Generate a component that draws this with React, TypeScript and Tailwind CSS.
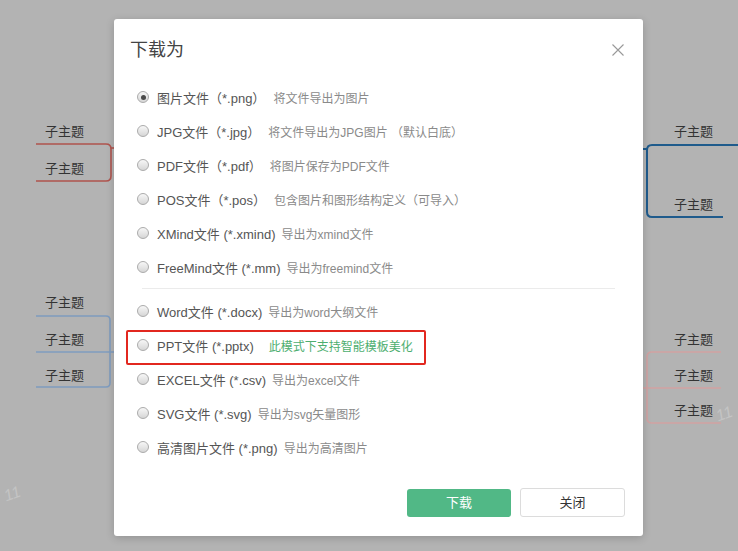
import React from "react"

const formats = [
  { main: "图片文件（*.png）", desc: "将文件导出为图片", checked: true, gap: "ml-[8px]" },
  { main: "JPG文件（*.jpg）", desc: "将文件导出为JPG图片 （默认白底）", gap: "ml-[8px]" },
  { main: "PDF文件（*.pdf）", desc: "将图片保存为PDF文件", gap: "ml-[8px]" },
  { main: "POS文件（*.pos）", desc: "包含图片和图形结构定义（可导入）", gap: "ml-[8px]" },
  { main: "XMind文件 (*.xmind)", desc: "导出为xmind文件", gap: "ml-[6px]" },
  { main: "FreeMind文件 (*.mm)", desc: "导出为freemind文件", gap: "ml-[6px]" },
]

const moreFormats = [
  { main: "Word文件 (*.docx)", desc: "导出为word大纲文件" },
  { main: "PPT文件 (*.pptx)", desc: "此模式下支持智能模板美化", highlight: true },
  { main: "EXCEL文件 (*.csv)", desc: "导出为excel文件" },
  { main: "SVG文件 (*.svg)", desc: "导出为svg矢量图形" },
  { main: "高清图片文件 (*.png)", desc: "导出为高清图片" },
]

function Radio({ checked }: { checked?: boolean }) {
  return (
    <span className="relative -top-[2px] flex h-[12px] w-[12px] shrink-0 items-center justify-center rounded-full border border-[#ababab] bg-gradient-to-b from-[#f7f7f7] to-[#d6d6d6]">
      {checked && <span className="h-[5px] w-[5px] rounded-full bg-[#4a4a4a]" />}
    </span>
  )
}

// mind map nodes behind the dialog overlay
const nodes = [
  { x: 45, y: 124 },
  { x: 45, y: 161 },
  { x: 45, y: 295 },
  { x: 45, y: 332 },
  { x: 45, y: 368 },
  { x: 674, y: 124 },
  { x: 674, y: 197 },
  { x: 674, y: 332 },
  { x: 674, y: 368 },
  { x: 674, y: 403 },
]

function MindMap() {
  return (
    <div className="absolute inset-0">
      <svg width="738" height="551" className="absolute left-0 top-0" fill="none">
        <path d="M36 144 H106 Q111 144 111 149 V176 Q111 181 106 181 H36" stroke="#b0544e" strokeWidth="1.6" />
        <path d="M111 148 H115" stroke="#b0544e" strokeWidth="1.6" />
        <path d="M36 316 H106 Q110 316 110 320 V383 Q110 387 106 387 H36" stroke="#7f9cbf" strokeWidth="1.6" />
        <path d="M36 352 H114" stroke="#7f9cbf" strokeWidth="1.6" />
        <path d="M738 145 H652 Q647 145 647 150 V212 Q647 217 652 217 H723" stroke="#1f5b8c" strokeWidth="2" />
        <path d="M643 149 H647" stroke="#1f5b8c" strokeWidth="2" />
        <path d="M721 352 H652 Q647 352 647 357 V418 Q647 423 652 423 H721" stroke="#d2a2a2" strokeWidth="1.6" />
        <path d="M643 388 H721" stroke="#d2a2a2" strokeWidth="1.6" />
      </svg>
      {nodes.map((n, i) => (
        <span
          key={i}
          className="absolute text-[13px] leading-[16px] text-[#333]"
          style={{ left: n.x, top: n.y }}
        >
          子主题
        </span>
      ))}
      <span className="absolute left-[4px] top-[482px] -rotate-[20deg] text-[16px] italic text-[#c4c4c4]">11</span>
      <span className="absolute left-[716px] top-[402px] -rotate-[20deg] text-[16px] italic text-[#c4c4c4]">11</span>
    </div>
  )
}

export default function App() {
  return (
    <div
      className="relative h-[551px] w-[738px] overflow-hidden bg-[#b3b3b3]"
      style={{ fontFamily: '"Liberation Sans", Arial, "Noto Sans CJK SC", sans-serif' }}
    >
      <MindMap />

      <div className="relative pl-[114px] pt-[19px]">
        <div className="flex h-[517px] w-[529px] flex-col rounded-[3px] bg-white shadow-[0_2px_8px_rgba(0,0,0,0.18)]">
          {/* header */}
          <div className="flex items-center justify-between pl-[16px] pr-[19px] pt-[19px]">
            <h2 className="text-[18px] leading-[24px] text-[#444]">下载为</h2>
            <svg width="12" height="12" viewBox="0 0 12 12" className="text-[#999]">
              <path d="M0.5 0.5 L11.5 11.5 M11.5 0.5 L0.5 11.5" stroke="currentColor" strokeWidth="1.1" />
            </svg>
          </div>

          {/* options */}
          <div className="mt-[20px] flex flex-col pl-[23px]">
            {formats.map((f) => (
              <label key={f.main} className="flex h-[34px] items-center">
                <Radio checked={f.checked} />
                <span className="ml-[8px] text-[13px] text-[#555]">{f.main}</span>
                <span className={`${f.gap} text-[12px] text-[#8a8a8a]`}>{f.desc}</span>
              </label>
            ))}

            <div className="mb-[7px] ml-[5px] mr-[28px] mt-[2px] h-px bg-[#ebebeb]" />

            {moreFormats.map((f) => (
              <label key={f.main} className="relative flex h-[34px] items-center">
                <Radio />
                <span className="ml-[8px] text-[13px] text-[#555]">{f.main}</span>
                <span className={f.highlight ? "ml-[15px] text-[12px] text-[#4dae6f]" : "ml-[6px] text-[12px] text-[#8a8a8a]"}>
                  {f.desc}
                </span>
                {f.highlight && (
                  <span className="absolute -left-[11px] top-[0px] h-[35px] w-[300px] rounded-[2px] border-[2.5px] border-[#e2271f]" />
                )}
              </label>
            ))}
          </div>

          {/* footer */}
          <div className="mt-auto flex justify-end gap-[9px] pb-[19px] pr-[18px]">
            <button className="mt-[1px] h-[28px] w-[104px] rounded-[3px] bg-[#51b886] text-[13px] text-white">下载</button>
            <button className="h-[29px] w-[105px] rounded-[3px] border border-[#dcdcdc] bg-white text-[13px] text-[#333]">关闭</button>
          </div>
        </div>
      </div>
    </div>
  )
}
